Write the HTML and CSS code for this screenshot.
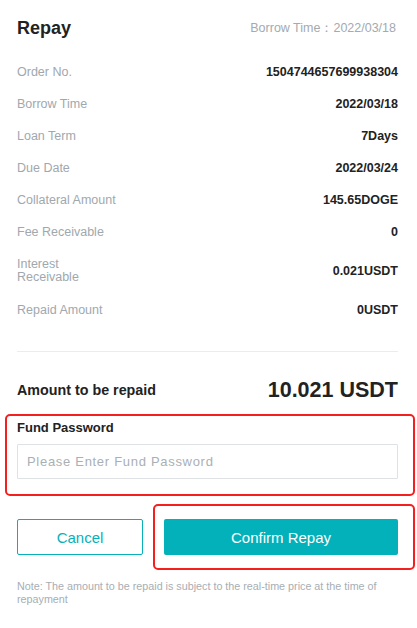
FILE: index.html
```html
<!DOCTYPE html>
<html lang="en">
<head>
<meta charset="utf-8">
<title>Repay</title>
<link rel="stylesheet" href="styles.css">
</head>
<body>
<div class="page">
  <header class="head">
    <h1 class="title">Repay</h1>
    <span class="borrow">Borrow Time：2022/03/18</span>
  </header>

  <div class="rows">
    <div class="row"><span class="label">Order No.</span><span class="value">1504744657699938304</span></div>
    <div class="row"><span class="label">Borrow Time</span><span class="value">2022/03/18</span></div>
    <div class="row"><span class="label">Loan Term</span><span class="value">7Days</span></div>
    <div class="row"><span class="label">Due Date</span><span class="value">2022/03/24</span></div>
    <div class="row"><span class="label">Collateral Amount</span><span class="value">145.65DOGE</span></div>
    <div class="row"><span class="label">Fee Receivable</span><span class="value">0</span></div>
    <div class="row tall"><span class="label narrow">Interest Receivable</span><span class="value">0.021USDT</span></div>
    <div class="row"><span class="label">Repaid Amount</span><span class="value">0USDT</span></div>
  </div>

  <hr class="divider">

  <div class="amount">
    <span class="amount-label">Amount to be repaid</span>
    <span class="amount-value">10.021 USDT</span>
  </div>

  <div class="fund marked">
    <div class="fund-label">Fund Password</div>
    <input class="fund-input" type="password" placeholder="Please Enter Fund Password">
  </div>

  <div class="actions">
    <button class="btn cancel">Cancel</button>
    <button class="btn confirm marked-btn">Confirm Repay</button>
  </div>

  <p class="note">Note: The amount to be repaid is subject to the real-time price at the time of repayment</p>
</div>
</body>
</html>
```

FILE: styles.css
```css
* { box-sizing: border-box; }
html, body { margin: 0; padding: 0; background: #fff; }
body {
  font-family: "Liberation Sans", Arial, sans-serif;
  color: #222;
}
.page {
  width: 417px;
  padding: 0 19px 0 17px;
}
.head {
  height: 56px;
  display: flex;
  align-items: center;
  justify-content: space-between;
}
.title {
  margin: 0;
  font-size: 18px;
  font-weight: bold;
  color: #222;
}
.borrow {
  font-size: 12.5px;
  color: #a3aab0;
  margin-right: 2px;
}
.rows { display: flex; flex-direction: column; }
.row {
  height: 32px;
  display: flex;
  align-items: center;
  justify-content: space-between;
}
.row.tall { height: 46px; }
.label {
  font-size: 12.5px;
  color: #a0a8ae;
  line-height: 13px;
}
.label.narrow { width: 84px; }
.value {
  font-size: 12.5px;
  font-weight: bold;
  color: #222;
}
.divider {
  margin: 25px 0 0;
  border: 0;
  border-top: 1px solid #ececec;
  height: 0;
}
.amount {
  margin-top: 25px;
  height: 26px;
  display: flex;
  align-items: center;
  justify-content: space-between;
}
.amount-label { font-size: 14.3px; font-weight: bold; }
.amount-value { font-size: 21.5px; font-weight: bold; }

.fund {
  margin-top: 17px;
  position: relative;
}
.fund-label {
  font-size: 13px;
  font-weight: bold;
  line-height: 16px;
}
.fund-input {
  display: block;
  width: 100%;
  height: 35px;
  margin-top: 8px;
  border: 1px solid #dfe2e4;
  border-radius: 1px;
  padding: 0 9px;
  font-family: "Liberation Sans", Arial, sans-serif;
  font-size: 13px;
  letter-spacing: 0.7px;
  color: #222;
  outline: none;
}
.fund-input::placeholder { color: #a9b0b5; }

.marked::after {
  content: "";
  position: absolute;
  left: -12px;
  right: -17px;
  top: -6px;
  bottom: -17px;
  border: 2px solid #f42020;
  border-radius: 5px;
  pointer-events: none;
}

.actions {
  margin-top: 40px;
  display: flex;
  gap: 21px;
}
.btn {
  height: 36px;
  border-radius: 2px;
  font-family: "Liberation Sans", Arial, sans-serif;
  font-size: 15px;
  padding: 0;
  cursor: pointer;
}
.cancel {
  width: 126px;
  background: #fff;
  border: 1px solid #07b1b9;
  color: #07b1b9;
}
.confirm {
  flex: 1;
  background: #02b1b9;
  border: 0;
  color: #fff;
  position: relative;
}
.marked-btn::after {
  content: "";
  position: absolute;
  left: -11px;
  right: -17px;
  top: -15px;
  bottom: -15px;
  border: 2px solid #f42020;
  border-radius: 5px;
  pointer-events: none;
}
.note {
  margin: 25px 0 0;
  font-size: 10.75px;
  line-height: 13px;
  color: #a7aeb3;
}
```
